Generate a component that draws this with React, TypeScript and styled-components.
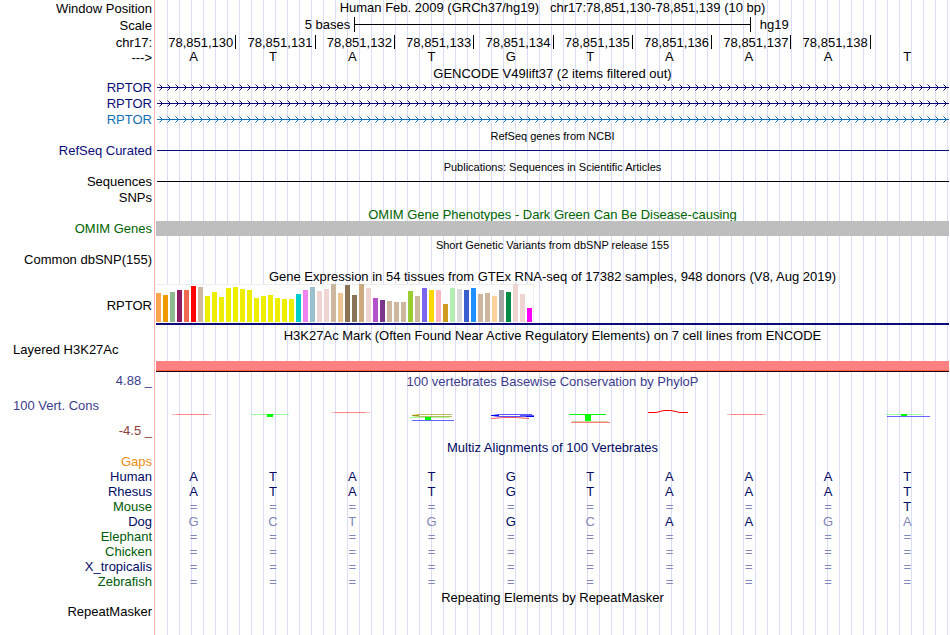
import React from "react";
import styled, { createGlobalStyle } from "styled-components";

const NAVY = "#0c0c78";
const SKY = "#146eb4";
const DEEP = "#000a64";
const GREEN = "#006400";
const PHYLO = "#3c3c8c";

const GlobalStyle = createGlobalStyle`
  body {
    margin: 0;
    background: #fff;
    color: #000;
    font: 13px/15px "Liberation Sans", Arial, Helvetica, sans-serif;
  }
`;

const Browser = styled.main`
  box-sizing: border-box;
  min-height: 100vh;
  padding-right: 1px;
  overflow: hidden;
  background:
    linear-gradient(#ffb4b4, #ffb4b4) 154px 0 / 1px 100% no-repeat,
    linear-gradient(#fff, #fff) 0 0 / 166px 100% no-repeat,
    linear-gradient(to right, #dcdcf5 1px, transparent 1px) 11px 0 / 12px 100%;
`;

const Row = styled.div<{ $h?: number }>`
  display: grid;
  grid-template-columns: 156px minmax(0, 1fr);
  height: ${(p) => p.$h ?? 16}px;
`;

const Label = styled.div<{ $color?: string }>`
  padding-right: 4px;
  text-align: right;
  white-space: nowrap;
  color: ${(p) => p.$color ?? "#000"};
`;

const HeadLabel = styled(Label)`
  line-height: 17px;
`;

const SideLabel = styled(Label)`
  padding-left: 13px;
  text-align: left;
`;

const AxisLabels = styled.div`
  display: flex;
  flex-direction: column;
  gap: 10px;
  padding-top: 10px;
`;

const Title = styled.h2<{ $color?: string; $small?: boolean }>`
  margin: 0;
  font-weight: 400;
  font-size: ${(p) => (p.$small ? 11 : 13)}px;
  line-height: ${(p) => (p.$small ? 16 : 17)}px;
  text-align: center;
  white-space: pre;
  color: ${(p) => p.$color ?? "#000"};
`;

const PageTitle = styled(Title).attrs({ as: "h1" })`
  line-height: 15px;
`;

const ScaleRow = styled.div`
  display: grid;
  grid-template-columns: 5fr 10fr 5fr;
`;

const ScaleStart = styled.span`
  padding-right: 4px;
  text-align: right;
`;

const ScaleEnd = styled.span`
  padding-left: 9px;
`;

const ScaleBar = styled.div`
  height: 15px;
  border: solid #000;
  border-width: 0 1px;
  box-sizing: border-box;
  background: linear-gradient(#000, #000) 0 7px / 100% 1px no-repeat;
`;

const Bases = styled.div`
  display: grid;
  grid-template-columns: repeat(10, minmax(0, 1fr));
`;

const Tick = styled.span`
  height: 14px;
  margin: 1px -1px 0 0;
  padding-right: 2px;
  border-right: 1px solid #000;
  text-align: right;
  white-space: nowrap;
  &:last-child {
    border: 0;
  }
`;

const Base = styled.span`
  padding-right: 4px;
  text-align: center;
`;

const ArrowSvg = styled.svg`
  display: block;
  width: 100%;
  height: 15px;
`;

const Line = styled.div<{ $color: string }>`
  height: 1px;
  margin: 7px 0 0 1px;
  background: ${(p) => p.$color};
`;

const GeneBar = styled.div`
  height: 15px;
  background: #bebebe;
`;

const Expression = styled.div`
  padding-top: 1px;
`;

const ExpressionBox = styled.div`
  display: flex;
  align-items: flex-end;
  gap: 2px;
  width: max-content;
  height: 38px;
  padding-right: 1px;
  border-right: 1px solid #eee;
  background: linear-gradient(#eee, #eee) 0 0 / 100% 1px no-repeat, #fff;
`;

const Tissue = styled.div<{ $h: number; $color: string }>`
  width: 5px;
  height: ${(p) => p.$h}px;
  background: ${(p) => p.$color};
`;

const GeneModel = styled.div`
  height: 2px;
  margin-top: 1px;
  background: ${NAVY};
`;

const ExpressionLabel = styled(Label)`
  padding-top: 15px;
`;

const Signal = styled.div`
  height: 9px;
  margin-top: 19px;
  background: #ff8080;
  border-bottom: 1px solid #ff6040;
  box-shadow: 0 1px 0 #200010;
`;

const LogoSvg = styled.svg`
  display: block;
  width: 48px;
  height: 51px;
  margin-left: 15px;
`;

const Alignment = styled.table`
  width: 100%;
  table-layout: fixed;
  border-collapse: collapse;
`;

const LabelCol = styled.col`
  width: 156px;
`;

const Species = styled.th<{ $color: string }>`
  height: 15px;
  padding: 0 4px 0 0;
  font-weight: 400;
  text-align: right;
  color: ${(p) => p.$color};
`;

const Cell = styled.td<{ $faint: boolean }>`
  height: 15px;
  padding: 0 4px 0 0;
  text-align: center;
  color: ${(p) => (p.$faint ? "#8286b8" : DEEP)};
`;

const positions = [130, 131, 132, 133, 134, 135, 136, 137, 138];
const sequence = "ATATGTAAAT".split("");

const genes = [NAVY, NAVY, SKY];

const Y = "#eeee00";
const T = "#cdb79e";
const P = "#eed5d2";
const tissues: [number, string][] = [
  [29, "#ffa54f"], [27, "#ee9a00"], [30, "#8fbc8f"], [32, "#8b1c62"], [32, "#ee6a50"], [36, "#ff0000"],
  [35, T], [26, Y], [30, Y], [25, Y], [34, Y], [35, Y], [33, Y], [32, Y], [24, Y], [26, Y], [27, Y],
  [24, Y], [23, Y], [23, Y], [28, "#00cdcd"], [32, "#ee82ee"], [35, "#9ac0cd"], [31, P], [33, P],
  [38, T], [29, "#eec591"], [37, "#8b7355"], [27, "#8b7355"], [38, "#cdaa7d"], [34, P],
  [24, "#b452cd"], [22, "#7a378b"], [21, T], [20, T], [20, T], [31, "#9acd32"], [26, T],
  [34, "#7a67ee"], [32, "#ffd700"], [32, "#ffb6c1"], [18, "#cd9b1d"], [34, "#b4eeb4"], [33, "#d9d9d9"],
  [32, "#3a5fcd"], [34, "#1e90ff"], [28, T], [29, T], [26, "#ffd39b"], [32, "#a6a6a6"],
  [30, "#008b45"], [38, P], [28, P], [14, "#ff00ff"],
];

const species: [string, string, string][] = [
  ["Gaps", "#eb8c14", "          "],
  ["Human", DEEP, "ATATGTAAAT"],
  ["Rhesus", DEEP, "ATATGTAAAT"],
  ["Mouse", "#005a0a", "=========T"],
  ["Dog", DEEP, "GCTGGCAAGA"],
  ["Elephant", "#005a0a", "=========="],
  ["Chicken", "#005a0a", "=========="],
  ["X_tropicalis", DEEP, "=========="],
  ["Zebrafish", "#005a0a", "=========="],
];

const FlatA = ({ y }: { y: number }) => (
  <g fill="#ff0000">
    <path d={`M1 ${y}h39v1h-39z`} opacity="0.25" />
    <path d={`M5 ${y}h31v1h-31z`} opacity="0.3" />
  </g>
);

const logos: React.ReactNode[] = [
  <FlatA y={26} />,
  <g fill="#00ff00">
    <path d="M1 26h38v1h-38z" opacity="0.4" />
    <path d="M17 26h6v3h-6z" />
  </g>,
  <FlatA y={24} />,
  <g>
    <path d="M43 26.5H10L3 27.5L10 28.5H43" fill="none" stroke="#a0960a" opacity="0.65" />
    <path d="M3 27h7v1h-7z" fill="#a0960a" />
    <path d="M1 29h40v1h-40z" fill="#00ff00" opacity="0.35" />
    <path d="M16 29h6v3h-6z" fill="#00ff00" />
    <path d="M3 32h42v1h-42z" fill="#0000ff" opacity="0.6" />
  </g>,
  <g fill="none">
    <path d="M44 26.5H10L4 27.5L10 28.5H42M32 27.5H46" stroke="#0000ff" opacity="0.65" />
    <path d="M3 27h8v1h-8zM38 28h8v1h-8z" fill="#0000ff" />
    <path d="M3 30.5L16 29.5H28L41 30.5" stroke="#ff0000" opacity="0.65" />
  </g>,
  <g>
    <path d="M1 26h37v1h-37zM17 26h6v7h-6z" fill="#00ff00" />
    <path d="M4 33h36v1h-36z" fill="#a0960a" opacity="0.4" />
    <path d="M3 34h39v1h-39z" fill="#ff0000" opacity="0.5" />
  </g>,
  <path d="M1 24.5H9L17 22.5H24L33 24.5H41" fill="none" stroke="#ff0000" />,
  <FlatA y={26} />,
  null,
  <g>
    <path d="M1 26h37v1h-37z" fill="#00ff00" opacity="0.35" />
    <path d="M16 26h6v2h-6z" fill="#00ff00" />
    <path d="M2 28h43v1h-43z" fill="#0000ff" opacity="0.6" />
  </g>,
];

function Arrows({ color, id }: { color: string; id: string }) {
  return (
    <ArrowSvg aria-hidden="true">
      <defs>
        <pattern id={id} width="8" height="15" patternUnits="userSpaceOnUse">
          <path d="M4 5h1v1h-1zM5 6h1v1h-1zM6 7h1v1h-1zM5 8h1v1h-1zM4 9h1v1h-1z" fill={color} />
          <path d="M3 4h1v1h-1zM3 10h1v1h-1z" fill={color} opacity="0.5" />
        </pattern>
      </defs>
      <rect x="1" y="7" width="100%" height="1" fill={color} />
      <rect x="1" width="100%" height="15" fill={`url(#${id})`} />
    </ArrowSvg>
  );
}

function Heading({ text, color, small }: { text: string; color?: string; small?: boolean }) {
  return (
    <Row $h={15}>
      <span />
      <Title $color={color} $small={small}>{text}</Title>
    </Row>
  );
}

export default function App() {
  return (
    <>
      <GlobalStyle />
      <Browser>
        <Row $h={17}>
          <HeadLabel>Window Position</HeadLabel>
          <PageTitle>{"Human Feb. 2009 (GRCh37/hg19)\u00a0\u00a0 chr17:78,851,130-78,851,139 (10 bp)"}</PageTitle>
        </Row>
        <Row $h={17}>
          <HeadLabel>Scale</HeadLabel>
          <ScaleRow>
            <ScaleStart>5 bases</ScaleStart>
            <ScaleBar />
            <ScaleEnd>hg19</ScaleEnd>
          </ScaleRow>
        </Row>
        <Row $h={15}>
          <HeadLabel>chr17:</HeadLabel>
          <Bases>
            {positions.map((n) => <Tick key={n}>78,851,{n}</Tick>)}
            <Tick />
          </Bases>
        </Row>
        <Row>
          <HeadLabel>---&gt;</HeadLabel>
          <Bases>{sequence.map((b, i) => <Base key={i}>{b}</Base>)}</Bases>
        </Row>

        <Heading text="GENCODE V49lift37 (2 items filtered out)" />
        {genes.map((color, i) => (
          <Row key={i}>
            <Label $color={color}>RPTOR</Label>
            <Arrows color={color} id={`arrow-${i}`} />
          </Row>
        ))}

        <Heading small text="RefSeq genes from NCBI" />
        <Row>
          <Label $color={NAVY}>RefSeq Curated</Label>
          <Line $color={NAVY} />
        </Row>

        <Heading small text="Publications: Sequences in Scientific Articles" />
        <Row>
          <Label>Sequences</Label>
          <Line $color="#000" />
        </Row>
        <Row>
          <Label>SNPs</Label>
        </Row>

        <Heading color={GREEN} text="OMIM Gene Phenotypes - Dark Green Can Be Disease-causing" />
        <Row>
          <Label $color={GREEN}>OMIM Genes</Label>
          <GeneBar />
        </Row>

        <Heading small text="Short Genetic Variants from dbSNP release 155" />
        <Row>
          <Label>Common dbSNP(155)</Label>
        </Row>

        <Heading text="Gene Expression in 54 tissues from GTEx RNA-seq of 17382 samples, 948 donors (V8, Aug 2019)" />
        <Row $h={44}>
          <ExpressionLabel>RPTOR</ExpressionLabel>
          <Expression>
            <ExpressionBox>
              {tissues.map(([h, color], i) => <Tissue key={i} $h={h} $color={color} />)}
            </ExpressionBox>
            <GeneModel />
          </Expression>
        </Row>

        <Heading text="H3K27Ac Mark (Often Found Near Active Regulatory Elements) on 7 cell lines from ENCODE" />
        <Row $h={31}>
          <SideLabel>Layered H3K27Ac</SideLabel>
          <Signal />
        </Row>

        <Row $h={15}>
          <Label $color={PHYLO}>4.88 _</Label>
          <Title $color={PHYLO}>100 vertebrates Basewise Conservation by PhyloP</Title>
        </Row>
        <Row $h={51}>
          <AxisLabels>
            <SideLabel $color={PHYLO}>100 Vert. Cons</SideLabel>
            <Label $color="#8c3c3c">-4.5 _</Label>
          </AxisLabels>
          <Bases>
            {logos.map((logo, i) => <LogoSvg key={i} viewBox="0 0 48 51" aria-hidden="true">{logo}</LogoSvg>)}
          </Bases>
        </Row>

        <Heading color={DEEP} text="Multiz Alignments of 100 Vertebrates" />
        <Alignment>
          <colgroup>
            <LabelCol />
            {sequence.map((_, i) => <col key={i} />)}
          </colgroup>
          <tbody>
            {species.map(([name, color, bases]) => (
              <tr key={name}>
                <Species scope="row" $color={color}>{name}</Species>
                {bases.split("").map((b, i) => (
                  <Cell key={i} $faint={b !== sequence[i]}>{b}</Cell>
                ))}
              </tr>
            ))}
          </tbody>
        </Alignment>

        <Heading text="Repeating Elements by RepeatMasker" />
        <Row>
          <Label>RepeatMasker</Label>
        </Row>
      </Browser>
    </>
  );
}
